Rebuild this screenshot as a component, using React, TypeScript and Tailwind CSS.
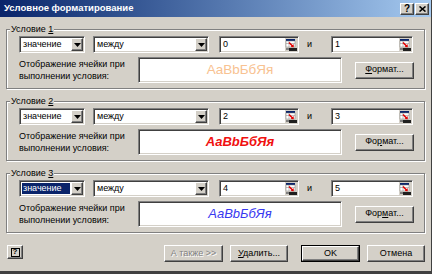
const sunken =
  'border border-t-[#808080] border-l-[#808080] border-b-white border-r-white shadow-[inset_1px_1px_0_#404040,inset_-1px_-1px_0_#d4d0c8] bg-white'
const raised =
  'border border-t-white border-l-white border-b-[#404040] border-r-[#404040] shadow-[inset_-1px_-1px_0_#808080,inset_1px_1px_0_#d4d0c8] bg-[#d4d0c8]'

function DropButton() {
  return (
    <div className={`flex h-full w-[12px] shrink-0 items-center justify-center ${raised}`}>
      <svg width="7" height="4" viewBox="0 0 7 4">
        <path d="M0 0h7L3.5 4z" fill="#000" />
      </svg>
    </div>
  )
}

function RangeIcon() {
  return (
    <svg width="12" height="13" viewBox="0 0 12 13" className="shrink-0">
      <rect x="0" y="0" width="12" height="13" fill="#d4d0c8" />
      <rect x="1" y="1" width="9" height="2" fill="#0a246a" />
      <rect x="1" y="3" width="9" height="6" fill="#fff" stroke="#808080" strokeWidth="0.5" />
      <path d="M1 5.5h9M4 3v6" stroke="#808080" strokeWidth="0.5" />
      <path d="M4 4.5l4 4" stroke="#e00000" strokeWidth="1.6" />
      <path d="M8.8 9.2l-3.2-0.2 3-3z" fill="#e00000" />
      <rect x="4" y="10" width="8" height="3" fill="#202020" />
      <rect x="1" y="10" width="3" height="2" fill="#808080" />
    </svg>
  )
}

function Combo({ w, text, selected }: { w: string; text: string; selected?: boolean }) {
  return (
    <div className={`flex h-[17px] ${w} shrink-0 items-stretch p-[1px] ${sunken}`}>
      <div className="flex flex-1 items-center pl-[1px] pr-[1px]">
        {selected ? (
          <span className="w-full bg-[#0a246a] pl-[1px] leading-[11px] text-white">{text}</span>
        ) : (
          <span className="pl-[1px]">{text}</span>
        )}
      </div>
      <DropButton />
    </div>
  )
}

function ValueBox({ w, value }: { w: string; value: string }) {
  return (
    <div className={`flex h-[17px] ${w} shrink-0 items-stretch p-[1px] ${sunken}`}>
      <div className="flex flex-1 items-center pl-[2px]">{value}</div>
      <RangeIcon />
    </div>
  )
}

function Button({ w, children, disabled }: { w: string; children: React.ReactNode; disabled?: boolean }) {
  return (
    <div
      className={`flex h-[17px] ${w} shrink-0 items-center justify-center ${raised} ${
        disabled ? 'text-[#808080] [text-shadow:1px_1px_0_#fff]' : ''
      }`}
    >
      {children}
    </div>
  )
}

function Group({
  n,
  a,
  b,
  selected,
  preview,
  fmt,
}: {
  n: string
  a: string
  b: string
  selected?: boolean
  preview: React.ReactNode
  fmt: React.ReactNode
}) {
  return (
    <fieldset className="mx-[6px] w-[419px] border border-[#808080] px-[3px] pt-[1px] pb-[5px] shadow-[1px_1px_0_#fff,inset_1px_1px_0_#fff]">
      <legend className="ml-0 bg-[#d4d0c8] px-[1px] leading-[12px]">
        Условие <u>{n}</u>
      </legend>
      <div className="pl-[9px]">
        <div className="flex items-center">
          <Combo w="w-[66px]" text="значение" selected={selected} />
          <div className="w-[8px]" />
          <Combo w="w-[116px]" text="между" />
          <div className="w-[10px]" />
          <ValueBox w="w-[80px]" value={a} />
          <div className="w-[32px] pl-[8px]">и</div>
          <ValueBox w="w-[82px]" value={b} />
        </div>
        <div className="mt-[4px] flex items-center">
          <div className="h-[26px] w-[119px] shrink-0 pt-[1px] leading-[12px]">
            Отображение ячейки при
            <br />
            выполнении условия:
          </div>
          <div className={`flex h-[26px] w-[204px] shrink-0 items-center justify-center ${sunken}`}>{preview}</div>
          <div className="w-[13px]" />
          <Button w="w-[59px]">{fmt}</Button>
        </div>
      </div>
    </fieldset>
  )
}

export default function App() {
  return (
    <div className="flex h-[274px] w-[432px] flex-col overflow-hidden border-b-[3px] border-r border-b-[#404040] border-r-[#404040] bg-[#d4d0c8] font-['Liberation_Sans',Arial,sans-serif] text-[9px] text-black">
      {/* title bar */}
      <div className="flex h-[17px] shrink-0 items-center bg-gradient-to-r from-[#0a246a] to-[#a6caf0] pl-[4px] pr-[2px]">
        <span className="flex-1 text-[9.5px] font-bold text-white">Условное форматирование</span>
        <div className={`flex h-[12px] w-[14px] items-center justify-center text-[10px] font-bold leading-none ${raised}`}>?</div>
        <div className="w-[1px]" />
        <div className={`flex h-[12px] w-[14px] items-center justify-center ${raised}`}>
          <svg width="7" height="6" viewBox="0 0 7 6">
            <path d="M0.5 0.5l6 5M6.5 0.5l-6 5" stroke="#000" strokeWidth="1.6" />
          </svg>
        </div>
      </div>

      <div className="mt-[6px]">
        <Group
          n="1"
          a="0"
          b="1"
          preview={<span className="text-[13.5px] text-[#f8c291]">AaBbБбЯя</span>}
          fmt={
            <span>
              <u>Ф</u>ормат...
            </span>
          }
        />
      </div>
      <div className="mt-[6px]">
        <Group
          n="2"
          a="2"
          b="3"
          preview={<span className="text-[13px] font-bold italic text-[#f01010]">AaBbБбЯя</span>}
          fmt={
            <span>
              Фо<u>р</u>мат...
            </span>
          }
        />
      </div>
      <div className="mt-[6px]">
        <Group
          n="3"
          a="4"
          b="5"
          selected
          preview={<span className="text-[13px] italic text-[#3838f0]">AaBbБбЯя</span>}
          fmt={
            <span>
              Фор<u>м</u>ат...
            </span>
          }
        />
      </div>

      {/* bottom buttons */}
      <div className="mt-[12px] flex items-start pl-[7px] pr-[6px]">
        <div className={`flex h-[14px] w-[16px] items-center justify-center ${raised}`}>
          <span className="flex h-[9px] w-[9px] items-center justify-center border border-black bg-[#d4d0c8] text-[8px] font-bold leading-none">
            ?
          </span>
        </div>
        <div className="flex-1" />
        <Button w="w-[59px]" disabled>
          А также &gt;&gt;
        </Button>
        <div className="w-[7px]" />
        <Button w="w-[58px]">
          <span>
            <u>У</u>далить...
          </span>
        </Button>
        <div className="w-[13px]" />
        <div className="h-[17px] w-[59px] border border-black">
          <div className={`flex h-full w-full items-center justify-center ${raised}`}>OK</div>
        </div>
        <div className="w-[7px]" />
        <Button w="w-[58px]">Отмена</Button>
      </div>
    </div>
  )
}
